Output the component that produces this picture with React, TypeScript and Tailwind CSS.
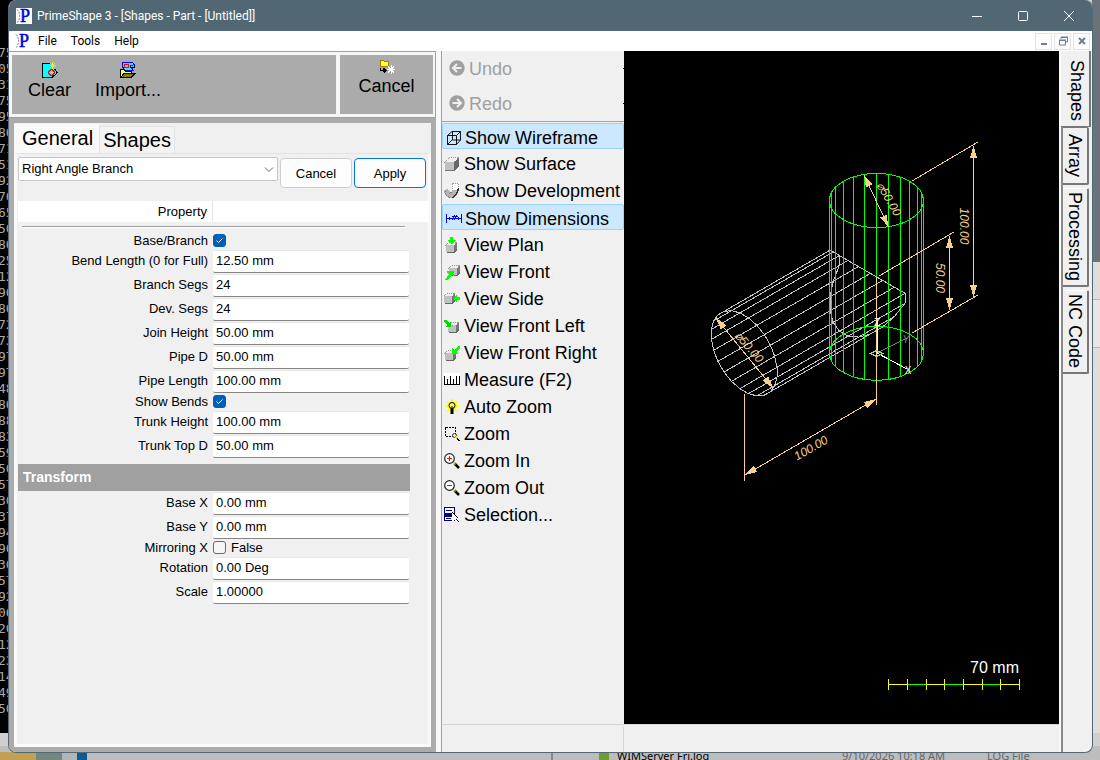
import type { ReactNode } from "react";

const TAN = "#f7d08a";
const GREEN = "#00ff00";
const PIPE = "#c4c4c4";

/* ---------- isometric model ---------- */

const SCALE = 1.528;
const ORIGIN = { x: 876.5, y: 353.3 };
const RADIUS = 25;
const SEGMENTS = 24;
const JOIN_HEIGHT = 50;
const PIPE_LENGTH = 100;
const TRUNK_HEIGHT = 100;

type Point = { x: number; y: number };

function project(x: number, y: number, z: number): Point {
  return {
    x: ORIGIN.x + (x + y) * 0.866 * SCALE,
    y: ORIGIN.y + (x - y) * 0.5 * SCALE - z * SCALE,
  };
}

const toPath = (points: Point[]) => points.map((p) => `${p.x.toFixed(1)},${p.y.toFixed(1)}`).join(" ");

const pipeAngles = Array.from({ length: SEGMENTS }, (_, i) => ((i * 15 + 7.5) * Math.PI) / 180);
const pipeEnd = pipeAngles.map((a) =>
  project(RADIUS * Math.cos(a), -PIPE_LENGTH, JOIN_HEIGHT + RADIUS * Math.sin(a)),
);
const pipeJoin = pipeAngles.map((a) =>
  project(RADIUS * Math.cos(a), -Math.abs(RADIUS * Math.sin(a)), JOIN_HEIGHT + RADIUS * Math.sin(a)),
);

const trunkRx = 47;
const trunkRy = 27;
const trunkTopY = ORIGIN.y - TRUNK_HEIGHT * SCALE;
const trunkLines = Array.from({ length: 13 }, (_, i) => {
  const a = ((i - 6) * 15 * Math.PI) / 180;
  return {
    x: Math.round(ORIGIN.x + trunkRx * Math.sin(a) - 0.5) + 0.5,
    y1: trunkTopY - trunkRy * Math.cos(a),
    y2: ORIGIN.y + trunkRy * Math.cos(a),
  };
});

function DimensionLine({ x1, y1, x2, y2 }: { x1: number; y1: number; x2: number; y2: number }) {
  const len = Math.hypot(x2 - x1, y2 - y1);
  const ux = (x2 - x1) / len;
  const uy = (y2 - y1) / len;
  const head = (x: number, y: number, d: number) =>
    `${x},${y} ${x + d * ux * 12 - uy * 3.5},${y + d * uy * 12 + ux * 3.5} ${x + d * ux * 12 + uy * 3.5},${y + d * uy * 12 - ux * 3.5}`;
  return (
    <g>
      <line x1={x1} y1={y1} x2={x2} y2={y2} stroke={TAN} />
      <polygon points={head(x1, y1, 1)} fill={TAN} />
      <polygon points={head(x2, y2, -1)} fill={TAN} />
    </g>
  );
}

function DimensionText({ x, y, angle, children }: { x: number; y: number; angle: number; children: string }) {
  return (
    <text
      x={x}
      y={y}
      transform={`rotate(${angle} ${x} ${y})`}
      textAnchor="middle"
      dominantBaseline="central"
      fontSize="12"
      fontStyle="italic"
      fill={TAN}
    >
      {children}
    </text>
  );
}

const ticks = [888.5, 907.5, 926.5, 944.5, 963.5, 982.5, 1000.5, 1019.5];

function Viewport() {
  return (
    <svg
      viewBox="624 51 435 673"
      className="block h-full w-full bg-black font-['Liberation_Sans',sans-serif]"
      fill="none"
      shapeRendering="crispEdges"
      role="img"
      aria-label="Right angle branch wireframe"
    >
      <g stroke={PIPE}>
        <polygon points={toPath(pipeEnd)} />
        <polygon points={toPath(pipeJoin)} />
        {pipeEnd.map((p, i) => (
          <line key={i} x1={p.x} y1={p.y} x2={pipeJoin[i].x} y2={pipeJoin[i].y} />
        ))}
      </g>
      <g stroke={GREEN}>
        <ellipse cx={ORIGIN.x} cy={trunkTopY} rx={trunkRx} ry={trunkRy} />
        <ellipse cx={ORIGIN.x} cy={ORIGIN.y} rx={trunkRx} ry={trunkRy} />
        {trunkLines.map((l) => (
          <line key={l.x} x1={l.x} y1={l.y1} x2={l.x} y2={l.y2} />
        ))}
      </g>
      <g stroke={TAN}>
        <line x1="912" y1="181" x2="978" y2="142" />
        <line x1="912" y1="333" x2="978" y2="295" />
        <line x1="879" y1="276" x2="954" y2="232" />
        <line x1="744.5" y1="394" x2="744.5" y2="481" />
        <line x1="876.5" y1="277" x2="876.5" y2="405" />
      </g>
      <DimensionLine x1={973.5} y1={146} x2={973.5} y2={297} />
      <DimensionLine x1={949.5} y1={236} x2={949.5} y2={310} />
      <DimensionLine x1={745} y1={475} x2={876} y2={399} />
      <DimensionLine x1={864} y1={175} x2={888.5} y2={227} />
      <DimensionLine x1={716} y1={318} x2={773} y2={388} />
      <DimensionText x={964} y={226} angle={90}>100.00</DimensionText>
      <DimensionText x={940} y={278} angle={90}>50.00</DimensionText>
      <DimensionText x={811} y={448} angle={-30}>100.00</DimensionText>
      <DimensionText x={889} y={199} angle={60}>⌀50.00</DimensionText>
      <DimensionText x={749} y={347} angle={49}>⌀50.00</DimensionText>
      <g>
        <line x1="877" y1="353" x2="907" y2="338" stroke="#808080" />
        <line x1="877" y1="353" x2="907" y2="369" stroke="#fff" />
        <line x1="877.5" y1="353" x2="877.5" y2="320" stroke="#fff" />
        <polygon points="870.5,353.5 876.5,350.5 882.5,353.5 876.5,356.5" stroke="#8fe08f" />
        <text x="877" y="326" fontSize="10" textAnchor="middle" fill="#fff">Z</text>
        <text x="908" y="374" fontSize="10" textAnchor="middle" fill="#fff">X</text>
        <text x="906" y="343" fontSize="11" fontStyle="italic" textAnchor="middle" fill="#808080">Y</text>
      </g>
      <text x="1019" y="673" fontSize="16" textAnchor="end" fill="#fff">70 mm</text>
      {ticks.slice(1).map((t, i) => (
        <line key={t} x1={ticks[i]} y1="684.5" x2={t} y2="684.5" stroke={i % 2 ? GREEN : "#ffff00"} />
      ))}
      {ticks.map((t) => (
        <line key={t} x1={t} y1="679" x2={t} y2="690" stroke="#ffff00" />
      ))}
    </svg>
  );
}

/* ---------- icons ---------- */

function Icon({ children }: { children: ReactNode }) {
  return (
    <svg viewBox="0 0 16 16" className="size-4 shrink-0" fill="none" shapeRendering="crispEdges" aria-hidden="true">
      {children}
    </svg>
  );
}

function Logo({ className }: { className: string }) {
  return (
    <svg viewBox="0 0 16 16" className={className} aria-hidden="true">
      <rect width="16" height="16" fill="#fff" />
      <path d="M1 1.500Q3.500 4 3.500 8Q3.500 12 1 15" fill="none" stroke="#777" strokeDasharray="2 1" />
      <text x="4" y="14" fontSize="18" fill="#0000e8" stroke="#0000e8" strokeWidth="0.5" className="font-['Liberation_Serif',serif]">
        P
      </text>
    </svg>
  );
}

const ClearIcon = (
  <>
    <path d="M.5 1.500H8M.5 1V15.500H10L14.500 11.500V9" fill="#00ffff" stroke="#000" />
    <path d="M1 2H9V6L14 10L10 15H1Z" fill="#00ffff" />
    <path d="M10 15.500L15.500 10.500L12.500 7" stroke="#000" />
    <circle cx="9.500" cy="10.500" r="2.800" fill="#c0c0c0" stroke="#ff0000" />
    <path d="M8 3.500H14M10.500 0V7M8 1L13 6M13 1L8 6" stroke="#ffe800" />
  </>
);
const ImportIcon = (
  <>
    <path d="M2.500 .5H12.500L14.500 2.500L10 4L13 8H5L2.500 5Z" fill="#00ffff" stroke="#0000ff" />
    <circle cx="6.500" cy="4" r="2" fill="#c0c0c0" stroke="#ff0000" />
    <path d="M.5 15V7.500H4L6 9.500H11.500V12" fill="#ffff60" stroke="#000" />
    <path d="M.5 15.500L4 11.500H15L11 15.500Z" fill="#808000" stroke="#000" />
    <path d="M11 5.500H15M14.500 3V6" stroke="#000" />
  </>
);
const CancelIcon = (
  <>
    <path d="M1 2H4L5 3H9V8H1Z" fill="#ffff40" stroke="#a08000" strokeWidth="1" />
    <path d="M1.500 10V12.500H6M4.500 10.500L6.500 12.500L4.500 14.500" stroke="#000" strokeWidth="1.500" />
    <path d="M12 7V16M7.500 11.500H16.500M9 8.500L15 14.500M15 8.500L9 14.500" stroke="#fff" />
  </>
);
const WireIcon = <path d="M1.500 5.500H10.500V14.500H1.500ZM1.500 5.500L6 1.500H14.500V10L10.500 14.500M10.500 5.500L14.500 1.500M6.500 1.500V10H14.500M6 10L1.500 14.500" stroke="#000" strokeWidth="0.900" shapeRendering="auto" />;
const cube = (x: number, y: number) => (
  <g transform={`translate(${x} ${y})`}>
    <path d="M0 3L3 0H11L8 3Z" fill="#eee" stroke="#999" strokeDasharray="1 1" />
    <path d="M0 3H8V10H0Z" fill="#c0c0c0" />
    <path d="M8 3L11 0V7L8 10Z" fill="#777" />
    <path d="M1 10.500H8L11 7.500" stroke="#666" />
  </g>
);
const SurfaceIcon = (
  <>
    <path d="M1 6L6 1H15L10 6Z" fill="#eee" stroke="#a0a0a0" strokeDasharray="1 1" />
    <path d="M1 6H10V15H1Z" fill="#c0c0c0" />
    <path d="M10 6L15 1V10L10 15Z" fill="#686868" />
    <path d="M1 14.500H10" stroke="#777" />
  </>
);
const DevIcon = (
  <>
    <path d="M8.500 .5H14.500V7H8.500Z" fill="#fff" stroke="#999" strokeDasharray="1 1" />
    <path d="M0 7.500L3 6L6 9H8V7H14V11L9 15H5Q0 13 0 7.500Z" fill="#b4b4b4" />
    <path d="M1 8Q2 13 6 14.500M5 11L8 8.500" stroke="#777" strokeDasharray="1 1" />
    <path d="M8.500 14.500Q13 12 14.500 5" stroke="#333" strokeWidth="1.500" />
  </>
);
const DimIcon = <path d="M.5 3V12M15.500 3V12M1 7.500H5M11 7.500H15M3.500 6V9M12.500 6V9M6.500 9.500L8.500 4M8.500 9.500L10.500 4M5.500 5.500H12M5 7.500H11" stroke="#0000ff" />;
const PlanIcon = (
  <>
    {cube(2, 5)}
    <path d="M6 0H9V3H12L7.500 7.500L3 3H6Z" fill="#00ff00" />
  </>
);
const FrontIcon = (
  <>
    {cube(5, 1)}
    <path d="M3 7H10V13L8 11L4 16H1L5 10L3 9Z" fill="#00ff00" />
  </>
);
const SideIcon = (
  <>
    {cube(0, 2)}
    <path d="M9 7.500L12.500 3.500V6H16V9H12.500V11.500Z" fill="#00ff00" />
  </>
);
const FrontLeftIcon = (
  <>
    {cube(4, 4)}
    <path d="M0 2H2L5 5L7 3V9H1L3 7L0 4Z" fill="#00d800" />
  </>
);
const FrontRightIcon = (
  <>
    {cube(1, 5)}
    <path d="M16 1V4L12 7L14 9H8V3L10 5L14 1Z" fill="#00ff00" />
  </>
);
const MeasureIcon = (
  <>
    <rect y="1" width="16" height="12" fill="#fff" />
    <path d="M.5 4V12M3.500 7V12M6.500 4V12M9.500 7V12M12.500 4V12M15.500 4V12M0 12.500H16" stroke="#000" />
  </>
);
const AutoIcon = (
  <>
    <path d="M8 0V14M1 7.500H15M3 2.500L13 12.500M13 2.500L3 12.500" stroke="#ffff00" strokeWidth="1.500" />
    <circle cx="8" cy="7" r="5" fill="#ffff00" />
    <g shapeRendering="auto">
      <circle cx="8" cy="6.500" r="3" fill="#fff68a" stroke="#000" />
      <path d="M8 7V10" stroke="#000" />
      <rect x="6.500" y="9.500" width="3" height="5.500" fill="#000" />
    </g>
  </>
);
const ZoomIcon = (
  <>
    <path d="M1.500 1.500H11.500V10.500H1.500Z" stroke="#000" strokeDasharray="2 1" />
    <circle cx="10.500" cy="9.500" r="2" fill="#eee" stroke="#333" shapeRendering="auto" />
    <path d="M12 11L13.500 12.500" stroke="#e8e800" strokeWidth="2" />
    <path d="M13 12.500L15.500 15" stroke="#000" />
  </>
);
const lens = (
  <g shapeRendering="auto">
    <path d="M10.500 10.500L15 15" stroke="#000" strokeWidth="2.500" />
    <path d="M9 9L11.500 11.500" stroke="#d8c800" strokeWidth="1.500" />
    <circle cx="5.500" cy="5.500" r="4.800" fill="#fff" stroke="#222" strokeWidth="1.200" />
  </g>
);
const ZoomInIcon = (
  <>
    {lens}
    <path d="M3 5.500H8M5.500 3V8" stroke="#ff0000" />
  </>
);
const ZoomOutIcon = (
  <>
    {lens}
    <path d="M3 5.500H8" stroke="#ff0000" />
  </>
);
const SelectionIcon = (
  <>
    <path d="M.5 .5H10.500V13.500H.5Z" fill="#fff" stroke="#000080" />
    <path d="M2 3.500H8M2 11.500H7" stroke="#000080" />
    <rect x="1" y="6" width="8" height="4" fill="#000080" />
    <path d="M8 5V15L10.500 12.500L13 15.500H15.500L12 11H14Z" fill="#fff" />
    <path d="M8 5L14 11M12 12L15.500 15.500" stroke="#000" />
  </>
);

/* ---------- controls ---------- */

const commands: { label: string; icon: ReactNode; active?: boolean }[] = [
  { label: "Show Wireframe", icon: WireIcon, active: true },
  { label: "Show Surface", icon: SurfaceIcon },
  { label: "Show Development", icon: DevIcon },
  { label: "Show Dimensions", icon: DimIcon, active: true },
  { label: "View Plan", icon: PlanIcon },
  { label: "View Front", icon: FrontIcon },
  { label: "View Side", icon: SideIcon },
  { label: "View Front Left", icon: FrontLeftIcon },
  { label: "View Front Right", icon: FrontRightIcon },
  { label: "Measure (F2)", icon: MeasureIcon },
  { label: "Auto Zoom", icon: AutoIcon },
  { label: "Zoom", icon: ZoomIcon },
  { label: "Zoom In", icon: ZoomInIcon },
  { label: "Zoom Out", icon: ZoomOutIcon },
  { label: "Selection...", icon: SelectionIcon },
];

function HistoryButton({ label, arrow }: { label: string; arrow: string }) {
  return (
    <button disabled className="flex h-[35px] w-full items-center gap-1 pl-[7px] text-lg text-[#a0a0a0]">
      <svg viewBox="0 0 16 16" className="mb-px size-4 shrink-0" aria-hidden="true">
        <circle cx="8" cy="8" r="7.700" fill="#a0a0a0" />
        <path d={arrow} fill="none" stroke="#f0f0f0" strokeWidth="2" />
      </svg>
      {label}
      <span className="ml-auto size-px bg-black" />
    </button>
  );
}

function TextRow({ label, value }: { label: string; value: string }) {
  return (
    <label className="flex h-6 items-center gap-[5px]">
      <span className="w-[191px] text-right">{label}</span>
      <input
        defaultValue={value}
        className="h-[23px] w-[196px] rounded-xs border-t border-b border-t-[#e8e8e8] border-b-[#868686] bg-white px-[3px] pb-0.5 outline-none"
      />
    </label>
  );
}

function CheckRow({ label, checked, note }: { label: string; checked: boolean; note?: string }) {
  return (
    <label className="flex h-[17px] items-center gap-[5px]">
      <span className="w-[191px] text-right">{label}</span>
      <span className="grid size-[13px]">
        <input
          type="checkbox"
          defaultChecked={checked}
          className="peer col-start-1 row-start-1 size-[13px] appearance-none rounded-[3px] border border-[#6a6a6a] bg-[#f6f6f6] checked:border-[#005fb8] checked:bg-[#005fb8]"
        />
        <svg viewBox="0 0 13 13" className="col-start-1 row-start-1 hidden size-[13px] peer-checked:block" aria-hidden="true">
          <path d="M3.500 6.500L5.500 8.500L9.500 4.500" fill="none" stroke="#fff" />
        </svg>
      </span>
      {note && <span>{note}</span>}
    </label>
  );
}

const digits =
  "75 05 31 75 95 80 71 51 92 70 65 50 80 25 12 90 80 72 73 97 97 48 80 88 83 59 50 57 30 37 94 90 30 57 92 06 20 12 23 14 49 50".split(" ");

function Desktop() {
  return (
    <div className="absolute inset-0 flex flex-col justify-between bg-[#cfcfcf]" aria-hidden="true">
      <div className="flex h-[733px] justify-between">
        <div className="w-5 bg-black pt-[45px] font-['DejaVu_Sans_Mono',monospace] text-[13px] leading-4 text-[#a8a8a8]">
          {digits.map((d, i) => (
            <div key={i} className="-ml-0.5">{d}</div>
          ))}
        </div>
        <div className="flex w-2 flex-col bg-[#dedede]">
          <div className="h-[262px] bg-[#69747a]" />
          <div className="h-[38px] border-b border-[#b8b8b8]" />
          <div className="h-12 border-b border-[#b8b8b8] bg-[#e6e6e6]" />
        </div>
      </div>
      <div className="flex h-3.5 items-end bg-[#bdbdbd] font-['Noto_Sans',sans-serif] text-[11px] leading-2">
        <div className="flex h-2 w-[617px] shrink-0 items-stretch">
          <div className="w-9 bg-[#c2a052]" />
          <div className="w-[26px] bg-[#74877f]" />
          <div className="w-[15px] bg-[#b0b5ba]" />
          <div className="w-2.5 bg-[#0a5a96]" />
          <div className="w-[466px] border-r-2 border-[#888]" />
          <div className="ml-[46px] w-2.5 bg-[#6f9c33]" />
        </div>
        <span className="w-[225px] shrink-0 text-black">WIMServer Fri.log</span>
        <span className="w-[145px] shrink-0 text-[#666]">9/10/2026 10:18 AM</span>
        <span className="shrink-0 text-[#666]">LOG File</span>
      </div>
    </div>
  );
}

const mdiButton = "grid h-[17px] w-[17px] place-items-center border border-[#e3e3e3] bg-[#fdfdfd] text-[#6d7f8f]";
const captionButton = "grid h-full w-[46px] place-items-center text-white";

export default function App() {
  return (
    <div className="relative h-screen overflow-hidden pr-[7px] pb-[7px] pl-2 font-['Liberation_Sans',sans-serif] text-[13px] text-black">
      <Desktop />
      <div className="relative flex h-full flex-col overflow-hidden rounded-lg border-x border-b border-[#516874] bg-[#f0f0f0]">
        <header className="flex h-[31px] shrink-0 items-center bg-[#516874] pl-[7px] font-[Roboto,sans-serif] text-xs text-white">
          <Logo className="size-4" />
          <h1 className="ml-[5px] flex-1">PrimeShape 3 - [Shapes - Part - [Untitled]]</h1>
          <button aria-label="Minimize" className={captionButton}>
            <svg viewBox="0 0 12 12" className="size-3"><path d="M1 6.500H11" stroke="currentColor" /></svg>
          </button>
          <button aria-label="Maximize" className={captionButton}>
            <svg viewBox="0 0 12 12" className="size-3"><rect x="1.500" y="1.500" width="9" height="9" rx="1" fill="none" stroke="currentColor" /></svg>
          </button>
          <button aria-label="Close" className={captionButton}>
            <svg viewBox="0 0 12 12" className="size-3"><path d="M1 1L11 11M11 1L1 11" stroke="currentColor" /></svg>
          </button>
        </header>

        <nav className="flex h-5 shrink-0 items-center bg-white pl-1.5 font-[Roboto,sans-serif] text-xs">
          <Logo className="size-4" />
          <div className="ml-[7px] flex flex-1 gap-3.5">
            <button>File</button>
            <button>Tools</button>
            <button>Help</button>
          </div>
          <div className="flex gap-0.5 pr-0.5">
            <button aria-label="Minimize document" className={mdiButton}>
              <svg viewBox="0 0 10 10" className="size-2.5"><path d="M2 8H8" stroke="currentColor" strokeWidth="2" /></svg>
            </button>
            <button aria-label="Restore document" className={mdiButton}>
              <svg viewBox="0 0 10 10" className="size-2.5" fill="none" stroke="currentColor"><path d="M3 3V1.500H9.500V6H7.500M3 1H10" /><path d="M1.500 4.500H7.500V9H1.500ZM1 4H8" /></svg>
            </button>
            <button aria-label="Close document" className={mdiButton}>
              <svg viewBox="0 0 10 10" className="size-2.5"><path d="M2 2L8 8M8 2L2 8" stroke="currentColor" strokeWidth="2" /></svg>
            </button>
          </div>
        </nav>

        <div className="flex min-h-0 flex-1">
          {/* property panel */}
          <section className="flex w-[427px] shrink-0 flex-col">
            <div className="flex h-[67px] gap-1 border-y border-r border-[#a0a0a0] bg-[#f6f6f6] px-[3px] py-[3px] pr-0.5 text-lg leading-6">
              <div className="flex flex-1 items-start gap-6 bg-[#ababab] pt-[7px] pl-4">
                <button className="flex flex-col items-center"><Icon>{ClearIcon}</Icon>Clear</button>
                <button className="flex flex-col items-center"><Icon>{ImportIcon}</Icon>Import...</button>
              </div>
              <button className="flex w-[93px] flex-col items-center justify-start bg-[#ababab] pt-[3px]"><Icon>{CancelIcon}</Icon>Cancel</button>
            </div>

            <div className="flex min-h-0 flex-1 flex-col border-[5px] border-[#ababab]">
              <div role="tablist" className="flex h-[30px] shrink-0 items-end text-xl leading-7">
                <button role="tab" aria-selected="true" className="h-[29px] bg-[#f9f9f9] pr-1.5 pb-px pl-2">General</button>
                <button role="tab" aria-selected="false" className="h-[27px] border border-b-0 border-[#e2e2e2] bg-[#f3f3f3] px-[3px] leading-6">Shapes</button>
              </div>
              <div className="flex min-h-0 flex-1 flex-col border-[3px] border-t border-[#fafafa] border-t-[#e2e2e2]">
                <div className="flex h-[47px] items-start gap-0.5 bg-[#f0f0f0] pt-[3px] pr-0.5 pl-px">
                  <div className="relative flex-1">
                    <select aria-label="Shape" className="h-6 w-full appearance-none rounded-xs border border-[#c8c8c8] bg-white px-[3px]">
                      <option>Right Angle Branch</option>
                    </select>
                    <svg viewBox="0 0 10 6" className="pointer-events-none absolute top-2.5 right-1 h-1.5 w-2.5" aria-hidden="true">
                      <path d="M1 .5L5 4.500L9 .5" fill="none" stroke="#666" />
                    </svg>
                  </div>
                  <button className="mt-px h-[30px] w-[72px] rounded-sm border border-[#cfcfcf] bg-[#fdfdfd] pt-0.5">Cancel</button>
                  <button className="mt-px h-[30px] w-[72px] rounded-sm border border-[#0078d4] bg-[#fdfdfd] pt-0.5">Apply</button>
                </div>

                <div className="ml-px flex h-[21px] shrink-0 items-center bg-white">
                  <span className="h-full w-[195px] border-r border-[#e5e5e5] pr-[5px] text-right leading-[21px]">Property</span>
                </div>
                <div className="mt-1 mr-[23px] mb-1 ml-[5px] h-0.5 shrink-0 border-t border-[#a0a0a0] bg-white" />

                <div>
                  <CheckRow label="Base/Branch" checked />
                  <TextRow label="Bend Length (0 for Full)" value="12.50 mm" />
                  <TextRow label="Branch Segs" value="24" />
                  <TextRow label="Dev. Segs" value="24" />
                  <TextRow label="Join Height" value="50.00 mm" />
                  <TextRow label="Pipe D" value="50.00 mm" />
                  <TextRow label="Pipe Length" value="100.00 mm" />
                  <CheckRow label="Show Bends" checked />
                  <TextRow label="Trunk Height" value="100.00 mm" />
                  <TextRow label="Trunk Top D" value="50.00 mm" />
                </div>
                <h2 className="mt-1.5 mr-[18px] ml-px h-[27px] shrink-0 bg-[#a0a0a0] pl-[5px] text-sm leading-[27px] font-bold text-white">Transform</h2>
                <div>
                  <TextRow label="Base X" value="0.00 mm" />
                  <TextRow label="Base Y" value="0.00 mm" />
                  <CheckRow label="Mirroring X" checked={false} note="False" />
                  <TextRow label="Rotation" value="0.00 Deg" />
                  <TextRow label="Scale" value="1.00000" />
                </div>
              </div>
            </div>
          </section>

          <div className="flex min-w-0 flex-1 flex-col border-l-[5px] border-[#f8f8f8]">
            <div className="flex min-h-0 flex-1 border-l border-[#a0a0a0]">
              {/* command list */}
              <aside className="w-[182px] shrink-0 bg-[#f0f0f0]">
                <div className="h-[71px] border-b border-[#a0a0a0]">
                  <HistoryButton label="Undo" arrow="M12.500 8H4.500M8 4L4 8L8 12" />
                  <HistoryButton label="Redo" arrow="M3.500 8H11.500M8 4L12 8L8 12" />
                </div>
                <ul className="pt-px text-lg">
                  {commands.map((c) => (
                    <li key={c.label} className="h-[27px]">
                      <button
                        aria-pressed={!!c.active}
                        className={
                          c.active
                            ? "flex h-[26px] w-full items-center gap-[3px] rounded-xs border border-[#99d1ff] bg-[#cce8ff] pt-[3px] pl-[3px] whitespace-nowrap"
                            : "flex h-[26px] w-full items-center gap-1 pt-0.5 pl-0.5 whitespace-nowrap"
                        }
                      >
                        <Icon>{c.icon}</Icon>
                        {c.label}
                      </button>
                    </li>
                  ))}
                </ul>
              </aside>
              <main className="min-w-0 flex-1">
                <Viewport />
              </main>
            </div>
            <footer className="flex h-7 shrink-0 border-t border-l border-t-[#d7d7d7] border-l-[#a0a0a0] bg-[#f0f0f0]">
              <div className="mt-0.5 w-[182px] border-r border-[#d7d7d7]" />
            </footer>
          </div>

          {/* page tabs */}
          <div role="tablist" aria-orientation="vertical" className="flex w-[33px] shrink-0 flex-col border-l-2 border-[#fafafa] text-lg leading-6">
            <button role="tab" aria-selected="true" className="mr-px h-[76px] border-r-2 border-b border-[#777] bg-[#f0f0f0] pt-1 pl-1 [writing-mode:vertical-rl]">Shapes</button>
            <div className="flex flex-1 flex-col gap-[3px] border-l-2 border-[#8a8a8a]">
              <button role="tab" aria-selected="false" className="mr-[3px] h-[58px] rounded-r-xs border-t border-r-2 border-b-2 border-[#777] pr-0 pl-0.5 [writing-mode:vertical-rl]">Array</button>
              <button role="tab" aria-selected="false" className="mr-[3px] h-[99px] rounded-r-xs border-t border-r-2 border-b-2 border-[#777] border-t-white pl-0.5 [writing-mode:vertical-rl]">Processing</button>
              <button role="tab" aria-selected="false" className="mr-[3px] h-[84px] rounded-r-xs border-t border-r-2 border-b-2 border-[#777] border-t-white pl-0.5 [writing-mode:vertical-rl]">NC Code</button>
            </div>
          </div>
        </div>
      </div>
    </div>
  );
}
